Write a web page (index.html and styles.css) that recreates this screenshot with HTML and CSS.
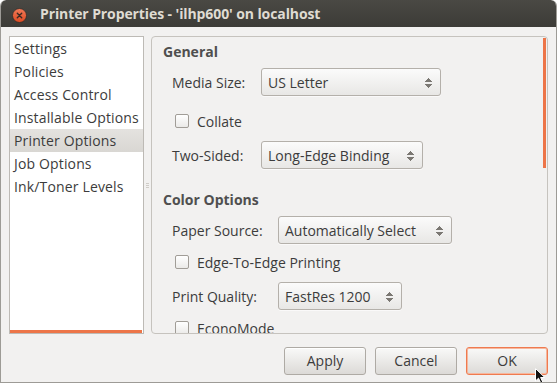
FILE: index.html
```html
<!DOCTYPE html>
<html lang="en">
  <head>
    <meta charset="UTF-8" />
    <title>Printer Properties</title>
    <link rel="stylesheet" href="styles.css">
  </head>
  <body>
    <div class="window">
      <div class="titlebar">
        <span class="close-btn">
          <svg width="15" height="15" viewBox="0 0 15 15">
            <defs>
              <linearGradient id="redg" x1="0" y1="0" x2="0" y2="1">
                <stop offset="0" stop-color="#f27a58" />
                <stop offset="1" stop-color="#dd4a22" />
              </linearGradient>
            </defs>
            <circle cx="7.5" cy="7.5" r="7" fill="url(#redg)" stroke="#2e2d2a" stroke-width="0.8" />
            <path d="M5.3 5.3 L9.7 9.7 M9.7 5.3 L5.3 9.7" stroke="#3a2a24" stroke-width="1.4" stroke-linecap="round" />
          </svg>
        </span>
        <span class="title">Printer Properties - 'ilhp600' on localhost</span>
      </div>

      <div class="content">
        <div class="main">
          <div class="side-list">
            <div class="side-item">Settings</div>
            <div class="side-item">Policies</div>
            <div class="side-item">Access Control</div>
            <div class="side-item">Installable Options</div>
            <div class="side-item selected">Printer Options</div>
            <div class="side-item">Job Options</div>
            <div class="side-item">Ink/Toner Levels</div>
            <div class="hscroll"></div>
          </div>

          <div class="pane-handle"><span></span><span></span><span></span></div>

          <div class="options-frame">
            <div class="options-inner">
              <div class="section-title">General</div>
              <div class="opt-row combo-row general">
                <span class="opt-label">Media Size:</span>
                <span class="combo w-media">US Letter<i class="arrows"></i></span>
              </div>
              <div class="opt-row check-row gap-collate">
                <span class="check"></span>Collate
              </div>
              <div class="opt-row combo-row general gap-two">
                <span class="opt-label">Two-Sided:</span>
                <span class="combo w-sided">Long-Edge Binding<i class="arrows"></i></span>
              </div>

              <div class="section-title gap-color">Color Options</div>
              <div class="opt-row combo-row color">
                <span class="opt-label">Paper Source:</span>
                <span class="combo w-source">Automatically Select<i class="arrows"></i></span>
              </div>
              <div class="opt-row check-row gap-check">
                <span class="check"></span>Edge-To-Edge Printing
              </div>
              <div class="opt-row combo-row color gap-quality">
                <span class="opt-label">Print Quality:</span>
                <span class="combo w-quality">FastRes 1200<i class="arrows"></i></span>
              </div>
              <div class="opt-row check-row gap-last">
                <span class="check"></span>EconoMode
              </div>
            </div>
            <div class="vscroll"></div>
          </div>
        </div>

        <div class="button-row">
          <button class="dlg-btn">Apply</button>
          <button class="dlg-btn">Cancel</button>
          <button class="dlg-btn default">OK</button>
        </div>
      </div>

      <!-- mouse pointer -->
      <svg class="pointer" width="12" height="17" viewBox="0 0 12 17">
        <path d="M0.5 0.5 L0.5 13 L3.5 10.2 L6 15.5 L8 14.6 L5.6 9.5 L9.8 9.5 Z" fill="#111" stroke="#fff" stroke-width="1" />
      </svg>
    </div>
  </body>
</html>
```

FILE: styles.css
```css
body {
  margin: 0;
  padding: 0;
  background: #ffffff;
  font-family: "Open Sans", "DejaVu Sans", sans-serif;
  font-size: 14px;
  color: #3c3c3c;
}
.window {
  position: relative;
  width: 557px;
  height: 383px;
  box-sizing: border-box;
  border: 1px solid #9d9b96;
  border-top: none;
  border-radius: 6px 6px 0 0;
  background: #f2f1f0;
  overflow: hidden;
}
.titlebar {
  display: flex;
  align-items: center;
  height: 27px;
  margin: 0 -1px;
  padding-left: 12px;
  background: linear-gradient(#4a4944, #3c3b37);
  border-radius: 6px 6px 0 0;
}
.close-btn {
  display: flex;
  width: 15px;
  height: 15px;
  margin-top: 3px;
}
.title {
  margin-left: 13px;
  color: #dfdbd2;
  font-weight: bold;
  font-size: 14px;
  letter-spacing: -0.1px;
}
.content {
  display: flex;
  flex-direction: column;
}
.main {
  display: flex;
  height: 298px;
  padding: 9px 8px 0 8px;
}
.side-list {
  position: relative;
  width: 135px;
  box-sizing: border-box;
  border: 1px solid #bdbab5;
  background: #ffffff;
}
.side-item {
  height: 23px;
  line-height: 23px;
  padding-left: 4px;
  white-space: nowrap;
  letter-spacing: 0.15px;
}
.side-item.selected {
  background: linear-gradient(#e4e2df, #d9d7d3);
}
.hscroll {
  position: absolute;
  left: 0;
  right: 1px;
  bottom: 0;
  height: 3px;
  background: #ed7548;
}
.pane-handle {
  display: flex;
  flex-direction: column;
  justify-content: center;
  gap: 1px;
  width: 7px;
  padding-left: 2px;
  box-sizing: border-box;
}
.pane-handle span {
  width: 3px;
  height: 1px;
  background: #cfccc7;
}
.options-frame {
  position: relative;
  width: 397px;
  box-sizing: border-box;
  border: 1px solid #c6c3be;
  border-radius: 4px;
  overflow: hidden;
}
.options-inner {
  padding: 5px 0 0 11px;
}
.vscroll {
  position: absolute;
  top: 1px;
  right: 1px;
  width: 3px;
  height: 130px;
  background: #ed7548;
}
.section-title {
  height: 20px;
  line-height: 20px;
  font-weight: bold;
  color: #4f4f4f;
}
.opt-row {
  display: flex;
  align-items: center;
  padding-left: 9px;
  white-space: nowrap;
}
.combo-row {
  height: 28px;
  margin-top: 6px;
}
.combo-row.general .opt-label {
  width: 89px;
}
.combo-row.color .opt-label {
  width: 106px;
}
.check-row {
  height: 20px;
}
.gap-collate {
  margin-top: 15px;
}
.gap-two {
  margin-top: 10px;
}
.gap-color {
  margin-top: 21px;
}
.gap-check {
  margin-top: 8px;
}
.gap-quality {
  margin-top: 10px;
}
.gap-last {
  margin-top: 8px;
}
.check {
  width: 12px;
  height: 12px;
  margin: 0 8px 0 3px;
  border: 1px solid #a19d97;
  border-radius: 2px;
  background: linear-gradient(#ffffff, #ebeae8);
}
.combo {
  position: relative;
  display: flex;
  align-items: center;
  height: 28px;
  box-sizing: border-box;
  padding-left: 6px;
  border: 1px solid #b4b0aa;
  border-radius: 3px;
  background: linear-gradient(#fbfbfb, #e8e7e5);
  box-shadow: 0 1px 0 rgba(255, 255, 255, 0.6);
}
.w-media {
  width: 180px;
}
.w-sided {
  width: 162px;
}
.w-source {
  width: 174px;
}
.w-quality {
  width: 124px;
}
.arrows {
  position: absolute;
  right: 8px;
  top: 9px;
  width: 7px;
  height: 10px;
  background:
    linear-gradient(to bottom right, transparent 50%, #7b7873 50%) left top / 4px 4px no-repeat,
    linear-gradient(to bottom left, transparent 50%, #7b7873 50%) right top / 3px 4px no-repeat,
    linear-gradient(to top right, transparent 50%, #7b7873 50%) left bottom / 4px 4px no-repeat,
    linear-gradient(to top left, transparent 50%, #7b7873 50%) right bottom / 3px 4px no-repeat;
}
.button-row {
  display: flex;
  justify-content: flex-end;
  gap: 9px;
  padding: 13px 8px 0 0;
}
.dlg-btn {
  width: 82px;
  height: 28px;
  padding: 0 0 1px;
  border: 1px solid #aeaaa4;
  border-radius: 3px;
  background: linear-gradient(#f9f9f8, #dcdad7);
  font-family: "Open Sans", "DejaVu Sans", sans-serif;
  font-size: 14px;
  color: #3c3c3c;
  box-shadow: inset 0 1px 0 #ffffff;
}
.dlg-btn.default {
  border-color: #ef7a4f;
  box-shadow: inset 0 0 0 1px #f6b79d;
}
.pointer {
  position: absolute;
  left: 534px;
  top: 368px;
}
```
